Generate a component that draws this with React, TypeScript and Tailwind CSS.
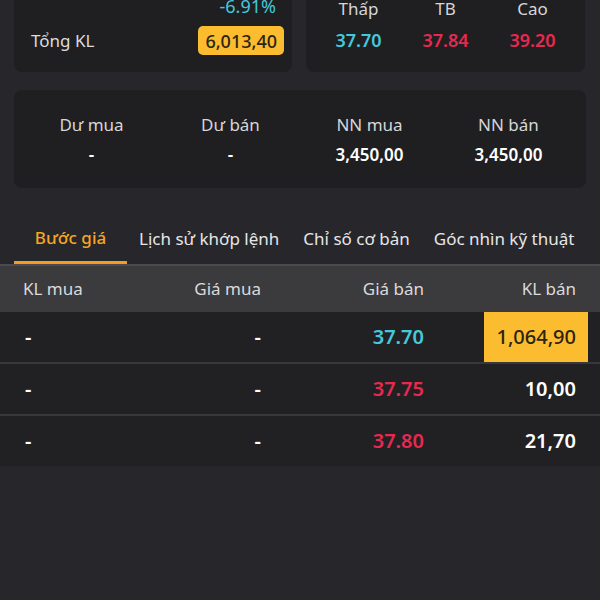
import React from 'react';

// Bảng giá chi tiết mã chứng khoán (màn hình tối)
interface PriceRow {
    klMua: string;
    giaMua: string;
    giaBan: string;
    klBan: string;
    priceColor: string;
    highlight?: boolean;
}

const summary = [
    { label: 'Dư mua', value: '-' },
    { label: 'Dư bán', value: '-' },
    { label: 'NN mua', value: '3,450,00' },
    { label: 'NN bán', value: '3,450,00' },
];

const tabs = ['Lịch sử khớp lệnh', 'Chỉ số cơ bản', 'Góc nhìn kỹ thuật'];

const rows: PriceRow[] = [
    { klMua: '-', giaMua: '-', giaBan: '37.70', klBan: '1,064,90', priceColor: 'text-[#45c8dc]', highlight: true },
    { klMua: '-', giaMua: '-', giaBan: '37.75', klBan: '10,00', priceColor: 'text-[#e8294f]' },
    { klMua: '-', giaMua: '-', giaBan: '37.80', klBan: '21,70', priceColor: 'text-[#e8294f]' },
];

export default function App() {
    return (
        <div
            className="w-[600px] h-[600px] overflow-hidden bg-[#27262b] text-[17px] leading-[24px] text-[#e4e4e6]"
            style={{ fontFamily: '"Noto Sans", "Open Sans", sans-serif' }}
        >
            {/* Thẻ trên cùng (đang cuộn dở) */}
            <div className="flex gap-[14px] px-[14px] -mt-[20px]">
                <div className="w-[278px] rounded-lg bg-[#1f1f22] pt-[14px] pb-[17px]">
                    <div className="flex justify-end pr-[16px] text-[18px] text-[#45c8dc]">-6.91%</div>
                    <div className="flex items-center justify-between mt-[8px] pl-[17px] pr-[8px]">
                        <span className="text-[#dcdcde]">Tổng KL</span>
                        <span className="h-[29px] flex items-center px-[7px] rounded-[5px] bg-[#fcbc30] text-[18px] text-[#2b2410] font-medium">
                            6,013,40
                        </span>
                    </div>
                </div>
                <div className="w-[279px] rounded-lg bg-[#1f1f22] px-[9px] pt-[17px] pb-[20px] grid grid-cols-3 text-center">
                    <div>
                        <div className="text-[#d6d6d8]">Thấp</div>
                        <div className="mt-[7px] text-[18px] font-semibold text-[#45c8dc]">37.70</div>
                    </div>
                    <div>
                        <div className="text-[#d6d6d8]">TB</div>
                        <div className="mt-[7px] text-[18px] font-semibold text-[#e8294f]">37.84</div>
                    </div>
                    <div>
                        <div className="text-[#d6d6d8]">Cao</div>
                        <div className="mt-[7px] text-[18px] font-semibold text-[#e8294f]">39.20</div>
                    </div>
                </div>
            </div>

            {/* Dư mua / Dư bán / NN */}
            <div className="mx-[14px] mt-[18px] h-[98px] rounded-lg bg-[#1f1f22] px-[8px] pt-[23px] grid grid-cols-4 text-center">
                {summary.map((item) => (
                    <div key={item.label}>
                        <div className="text-[#d6d6d8]">{item.label}</div>
                        <div className="mt-[6px] font-semibold text-white">{item.value}</div>
                    </div>
                ))}
            </div>

            {/* Tabs */}
            <div className="mt-[26px] flex pl-[14px] whitespace-nowrap">
                <div className="w-[113px] h-[50px] flex items-center justify-center border-b-[3px] border-[#f39c1f] text-[#f5a623] font-medium">
                    Bước giá
                </div>
                {tabs.map((tab) => (
                    <div key={tab} className="h-[50px] flex items-center px-[12px] text-[#e6e6e8]">
                        {tab}
                    </div>
                ))}
            </div>
            <div className="h-[2px] bg-[#4a4a4e]" />

            {/* Bảng bước giá */}
            <div className="h-[46px] flex items-center bg-[#3b3b3e] pl-[23px] pr-[12px] text-[#dadadc]">
                <div className="w-[119px]">KL mua</div>
                <div className="w-[119px] text-right">Giá mua</div>
                <div className="w-[163px] text-right">Giá bán</div>
                <div className="w-[164px] flex justify-end">
                    <span className="px-[12px]">KL bán</span>
                </div>
            </div>
            {rows.map((row, i) => (
                <div
                    key={i}
                    className={`h-[50px] flex items-center bg-[#212124] pl-[23px] pr-[12px] text-[20px] font-semibold ${i > 0 ? 'border-t-2 border-[#38383b] box-content' : ''}`}
                >
                    <div className="w-[119px] pl-[2px] text-white">{row.klMua}</div>
                    <div className="w-[119px] text-right text-white">{row.giaMua}</div>
                    <div className={`w-[163px] text-right ${row.priceColor}`}>{row.giaBan}</div>
                    <div className="w-[164px] h-full flex justify-end">
                        {row.highlight ? (
                            <span className="h-full flex items-center px-[12px] bg-[#fcbc30] text-[#2b2410] font-medium">
                                {row.klBan}
                            </span>
                        ) : (
                            <span className="h-full flex items-center px-[12px] text-white">{row.klBan}</span>
                        )}
                    </div>
                </div>
            ))}
        </div>
    );
}
